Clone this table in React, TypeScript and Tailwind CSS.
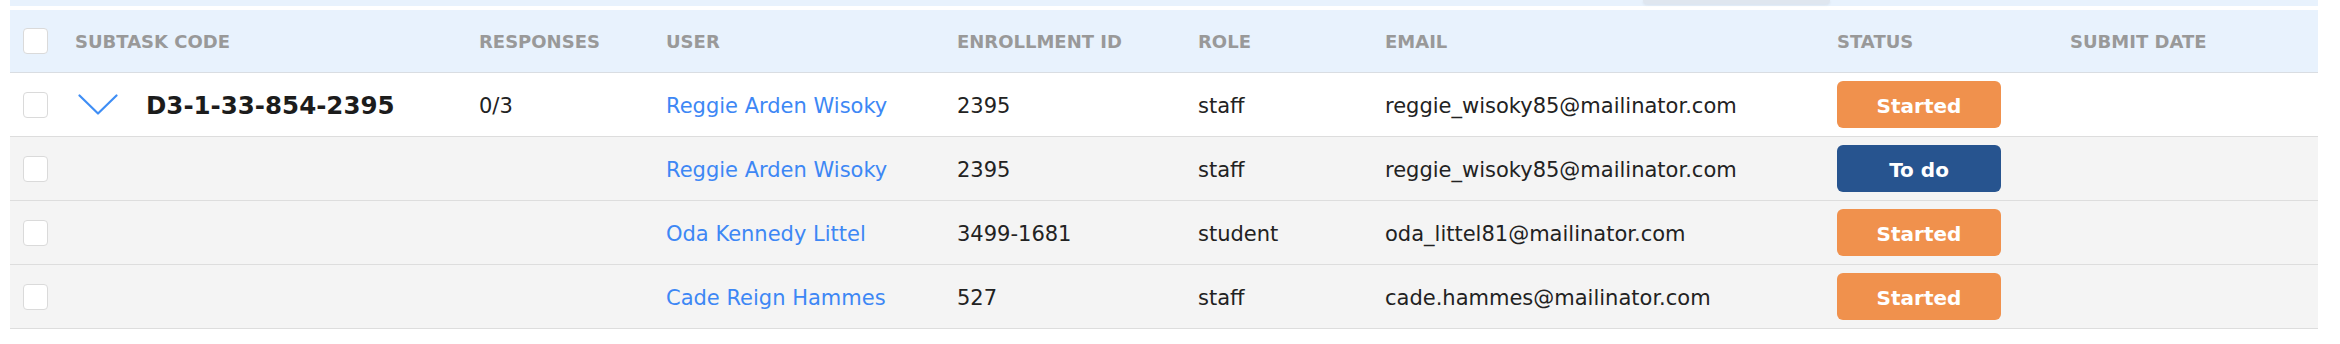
import React from 'react';

type Status = 'Started' | 'To do';

interface Row {
  code?: string;
  responses?: string;
  user: string;
  enrollment: string;
  role: string;
  email: string;
  status: Status;
}

const rows: Row[] = [
  {
    code: 'D3-1-33-854-2395',
    responses: '0/3',
    user: 'Reggie Arden Wisoky',
    enrollment: '2395',
    role: 'staff',
    email: 'reggie_wisoky85@mailinator.com',
    status: 'Started',
  },
  {
    user: 'Reggie Arden Wisoky',
    enrollment: '2395',
    role: 'staff',
    email: 'reggie_wisoky85@mailinator.com',
    status: 'To do',
  },
  {
    user: 'Oda Kennedy Littel',
    enrollment: '3499-1681',
    role: 'student',
    email: 'oda_littel81@mailinator.com',
    status: 'Started',
  },
  {
    user: 'Cade Reign Hammes',
    enrollment: '527',
    role: 'staff',
    email: 'cade.hammes@mailinator.com',
    status: 'Started',
  },
];

// column template shared by header and rows
const cols =
  'grid grid-cols-[65px_404px_187px_291px_241px_187px_452px_233px_1fr] items-center';

const Checkbox = () => (
  <div className="ml-[13px] w-[25px] h-[26px] rounded-[4px] border border-[#dadada] bg-white" />
);

const Chevron = () => (
  <svg width="40" height="21" viewBox="0 0 40 21" fill="none" className="ml-[3px]">
    <path d="M1.5 1.5 L20 19.5 L38.5 1.5" stroke="#3f8ef5" strokeWidth="2.2" strokeLinecap="round" strokeLinejoin="round" />
  </svg>
);

const StatusBadge = ({ status }: { status: Status }) => (
  <div
    className={`w-[164px] h-[47px] rounded-[6px] flex items-center justify-center text-white font-bold text-[20px] pt-[2px] ${
      status === 'Started' ? 'bg-[#f0914d]' : 'bg-[#27548f]'
    }`}
  >
    {status}
  </div>
);

export default function App() {
  return (
    <div className="w-[2340px] h-[344px] bg-white pl-[10px] font-['DejaVu_Sans',sans-serif]">
      <div className="w-[2308px]">
        {/* strip of the bar above */}
        <div className="h-[6px] bg-[#e8f2fd] flex">
          <div className="ml-[1633px] w-[187px] h-[4px] rounded-b-[12px] bg-[#dfe6ef] shadow-[0_1px_3px_rgba(0,0,0,0.08)]" />
        </div>
        <div className="h-[4px]" />

        {/* Header */}
        <div className={`${cols} h-[63px] bg-[#e8f2fd] border-b border-[#d9dde2] text-[#999999] font-bold text-[18px] uppercase`}>
          <Checkbox />
          <div>Subtask Code</div>
          <div>Responses</div>
          <div>User</div>
          <div>Enrollment ID</div>
          <div>Role</div>
          <div>Email</div>
          <div>Status</div>
          <div>Submit Date</div>
        </div>

        {/* Rows */}
        {rows.map((row, i) => (
          <div
            key={i}
            className={`${cols} h-[64px] border-b border-[#dddddd] text-[21px] text-[#222222] ${
              i === 0 ? 'bg-white' : 'bg-[#f4f4f4]'
            }`}
          >
            <Checkbox />
            <div className="flex items-center">
              {row.code && (
                <>
                  <Chevron />
                  <span className="ml-[28px] pt-[3px] font-bold text-[24.5px] text-[#1c1c1c]">{row.code}</span>
                </>
              )}
            </div>
            <div className="pt-[4px]">{row.responses}</div>
            <div className="pt-[4px] text-[#3d87f5]">{row.user}</div>
            <div className="pt-[4px]">{row.enrollment}</div>
            <div className="pt-[4px]">{row.role}</div>
            <div className="pt-[4px]">{row.email}</div>
            <div>
              <StatusBadge status={row.status} />
            </div>
            <div />
          </div>
        ))}
      </div>
    </div>
  );
}
